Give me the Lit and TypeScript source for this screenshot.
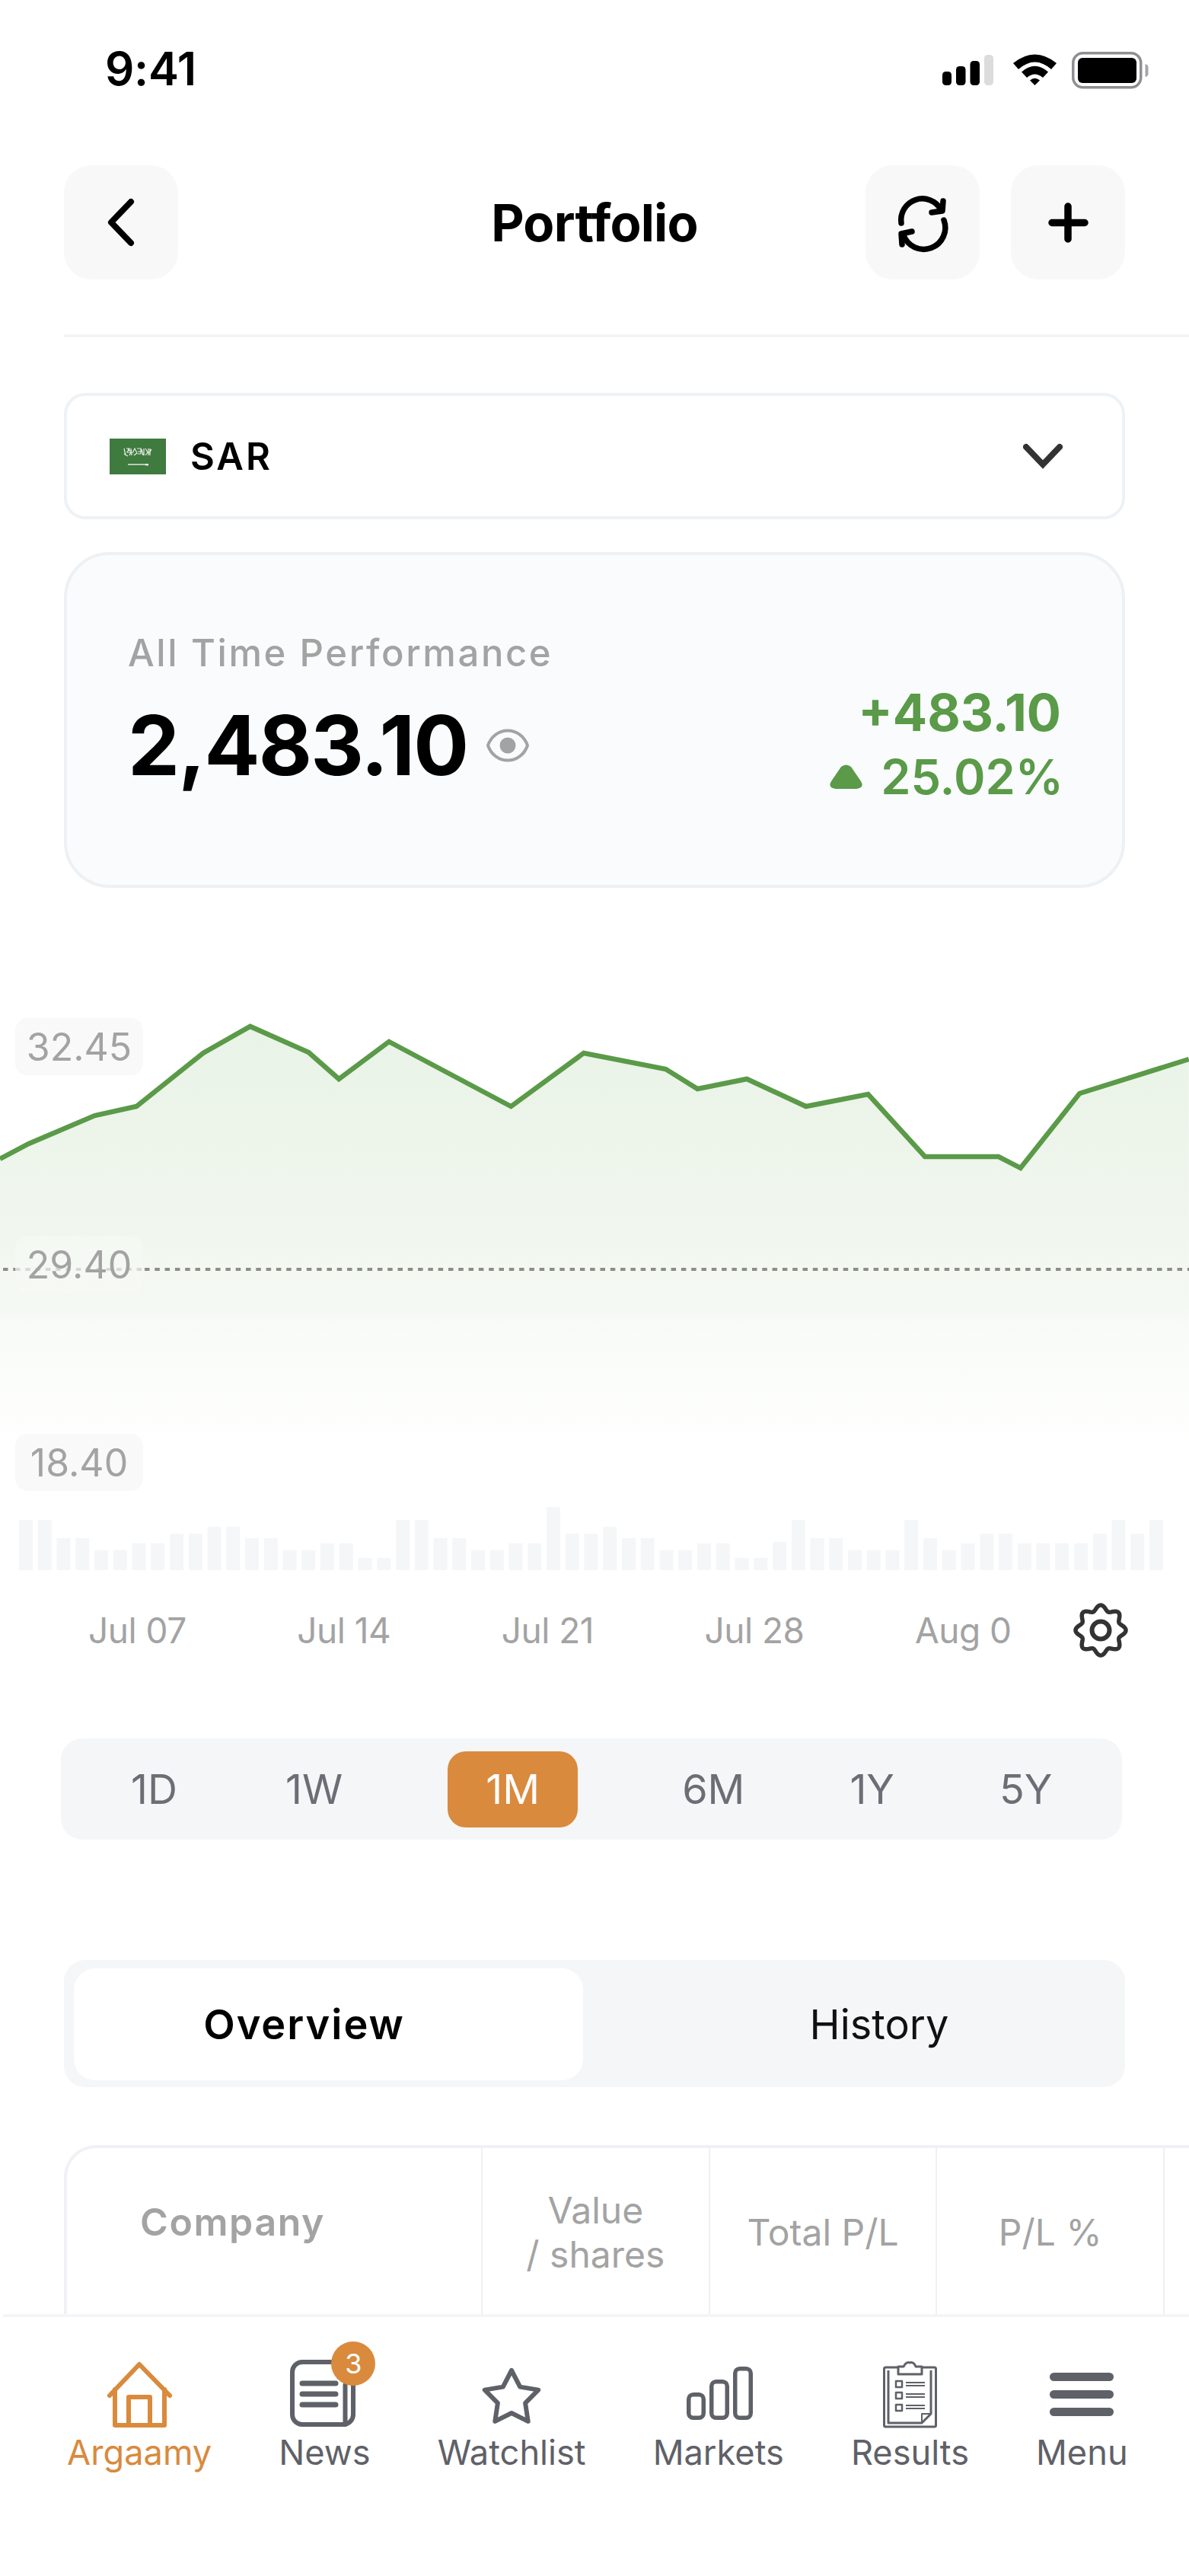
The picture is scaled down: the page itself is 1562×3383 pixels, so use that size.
import { LitElement, html, css, svg } from "lit";
import { customElement } from "lit/decorators.js";

const LINE: [number, number][] = [
  [0, 1522], [38, 1502], [125, 1465], [180, 1453], [268, 1383], [330, 1348], [407, 1382], [447, 1417],
  [513, 1368], [674, 1453], [770, 1383], [878, 1404], [920, 1430], [985, 1417], [1063, 1453], [1145, 1437],
  [1220, 1519], [1317, 1519], [1346, 1534], [1424, 1436], [1568, 1391],
];
const BAR_TOPS = [828,828,900,900,947,947,920,920,883,883,855,855,900,900,947,947,920,920,978,978,828,828,900,900,947,947,920,920,778,883,883,855,900,900,947,947,920,920,978,978,915,828,900,900,947,947,947,828,900,947,920,883,883,920,920,920,920,883,828,883,828];

const linePts = LINE.map((p) => `${(p[0] / 1.004).toFixed(1)},${p[1]}`).join(" ");
const areaPts = `0,1900 ${linePts} 1562,1900`;

function gearPath(cx: number, cy: number, R: number, a: number, n: number) {
  const pts: string[] = [];
  for (let i = 0; i < 240; i++) {
    const t = (i / 240) * Math.PI * 2;
    const r = R + a * Math.cos(n * t);
    pts.push(`${(cx + r * Math.sin(t)).toFixed(2)},${(cy - r * Math.cos(t)).toFixed(2)}`);
  }
  return "M" + pts.join("L") + "Z";
}
function starPts(cx: number, cy: number, R: number, r: number) {
  const pts: string[] = [];
  for (let i = 0; i < 10; i++) {
    const t = (i / 10) * Math.PI * 2;
    const q = i % 2 ? r : R;
    pts.push(`${(cx + q * Math.sin(t)).toFixed(1)},${(cy - q * Math.cos(t)).toFixed(1)}`);
  }
  return pts.join(" ");
}

@customElement("app-root")
export class AppRoot extends LitElement {
  static styles = css`
    :host { display: block; font-family: Inter, "Liberation Sans", sans-serif; }
    * { box-sizing: border-box; }
    .page { position: relative; width: 1562px; height: 3383px; overflow: hidden; background: #fff; color: #000; }
    svg { display: block; }

    .status { height: 180px; padding: 0 52px 0 138px; display: flex; align-items: center; justify-content: space-between; }
    .time { font-size: 60px; font-weight: 600; letter-spacing: -0.3px; }
    .status-icons { display: flex; align-items: center; margin-top: 12px; }

    .head { margin: 37px 84px 0 84px; display: grid; grid-template-columns: 1fr auto 1fr; align-items: center; }
    .btn { width: 150px; height: 150px; border-radius: 36px; background: #f8f8f8; display: flex; align-items: center; justify-content: center; }
    .title { font-size: 67px; font-weight: 700; letter-spacing: -0.8px; text-align: center; }
    .head-right { display: flex; justify-content: flex-end; gap: 41px; }
    .rule { margin: 72px 0 0 84px; height: 4px; background: #f3f4f6; }

    .select { margin: 73px 84px 0 84px; height: 166px; border: 4px solid #eef2f5; border-radius: 28px; display: flex; align-items: center; padding: 0 78px 0 56px; }
    .sar { margin-left: 32px; font-size: 49px; font-weight: 600; letter-spacing: 3px; }
    .chev { margin-left: auto; }

    .card { margin: 43px 84px 0 84px; height: 441px; border: 4px solid #eef1f4; border-radius: 60px; background: #f9fbfc; padding: 99px 80px 0 80px; display: flex; justify-content: space-between; }
    .perf { font-size: 49px; font-weight: 500; letter-spacing: 2.600px; color: #a3a3a3; line-height: 60px; }
    .total { display: flex; align-items: center; margin-top: 26px; gap: 24px; }
    .amount { font-size: 108px; font-weight: 700; letter-spacing: -1.800px; line-height: 130px; }
    .gain { text-align: right; color: #5a9a48; font-weight: 700; font-size: 67px; line-height: 84px; margin-top: 66px; }
    .pct { display: flex; align-items: center; justify-content: flex-end; gap: 24px; font-size: 63px; font-weight: 600; margin-right: -3px; }

    .chart { position: relative; margin-top: 134px; height: 801px; }
    .pill { position: absolute; left: 20px; width: 168px; height: 75px; border-radius: 16px; background: #f9f9f9; font-size: 50px; color: #a3a3a3; display: flex; align-items: center; justify-content: center; }
    .pill.clear { background: rgba(250, 252, 250, 0.35); }

    .dates { height: 80px; display: flex; align-items: center; gap: 145.500px; padding-left: 116px; font-size: 46px; letter-spacing: -0.5px; color: #a3a3a3; position: relative; }
    .gear { position: absolute; left: 1406px; top: 0; }

    .range { margin: 102px 88px 0 80px; height: 133px; border-radius: 28px; background: #f5f6f8; display: flex; align-items: center; gap: 138px; padding-left: 92px; font-size: 54px; color: #6b6e75; }
    .range span:first-child { margin-right: 4px; }
    .range .on { width: 171px; height: 100px; border-radius: 24px; background: #d98a3d; color: #fff; display: flex; align-items: center; justify-content: center; margin-right: -1px; }

    .tabs { margin: 158px 84px 0 84px; height: 167px; border-radius: 28px; background: #f5f6f8; padding: 11px 14px 9px 13px; display: flex; font-size: 54px; }
    .tab { flex: 1; display: flex; align-items: center; justify-content: center; color: #111; }
    .tab.on { flex: 0 0 669px; background: #fff; border-radius: 28px; font-weight: 600; letter-spacing: 2px; color: #000; padding-right: 64px; }
    .tab.off { padding-left: 80px; }

    .table { margin: 76px 0 0 84px; height: 300px; width: 1900px; border: solid #eff1f5; border-width: 4px 0 0 4px; border-top-left-radius: 42px; display: flex; }
    .cell { flex: 0 0 298.700px; border-right: 2px solid #eef0f3; display: flex; align-items: center; justify-content: center; font-size: 48px; line-height: 58px; color: #a3a3a3; text-align: center; height: 222px; }
    .cell.first { flex: 0 0 546px; justify-content: flex-start; padding: 0 0 28px 96px; font-size: 50px; font-weight: 600; letter-spacing: 1.600px; }

    .nav { position: absolute; left: 0; right: 0; bottom: 0; height: 344px; background: #fff; padding: 31px 0 0 88px; display: flex; gap: 88px; align-items: flex-start; color: #5f6168; font-size: 45.200px; }
    .nav::before { content: ""; position: absolute; left: 4px; right: 0; top: 0; height: 4px; background: #f4f5f7; }
    .nav-item { position: relative; display: flex; flex-direction: column; align-items: center; margin-top: 4px; }
    .nav-item.on { color: #d98a3d; }
    .nav-item svg { width: 120px; height: 116px; margin: 0 -30px; }
    .nav-label { line-height: 52px; margin-top: 5px; }
    .badge { position: absolute; left: calc(50% + 9px); top: 1px; width: 58px; height: 58px; border-radius: 50%; background: #d98a3d; color: #fff; font-size: 36px; display: flex; align-items: center; justify-content: center; }
  `;

  private flag() {
    return html`<svg width="74" height="47" viewBox="0 0 74 47">
      <rect width="74" height="47" fill="#3f7a3f"></rect>
      <path d="M19 13l2 9M22 13h4l-3 5h5l-2 4M28 13l1 9M30 19l3-6 3 6-4 3M36 13h5v7h-4M42 14l2 8M45 13v9M47 13l3 5-3 4M51 13v9M53 13v9M55 14l-3 5M19 20l5 3M24 14l5 3M37 17h5" fill="none" stroke="#e8f0e6" stroke-width="1.200"></path>
      <path d="M24 34h25" stroke="#e8f0e6" stroke-width="1.400"></path>
      <path d="M47 33h4v2.400h-4z" fill="#e8f0e6"></path>
    </svg>`;
  }

  render() {
    return html`<div class="page">
      <div class="status">
        <span class="time">9:41</span>
        <svg class="status-icons" width="272" height="60" viewBox="0 -4 272 60">
          <rect x="0" y="24" width="12" height="18" rx="4.500" fill="#000"></rect>
          <rect x="18" y="17" width="12.500" height="25" rx="4.500" fill="#000"></rect>
          <rect x="36.500" y="10" width="12.500" height="32" rx="4.500" fill="#000"></rect>
          <rect x="55" y="2" width="12" height="40" rx="4.500" fill="#dcdcdc"></rect>
          <path d="M93 13 Q121.500 -10 150 13 L143 21 Q121.500 2 100 21Z M104 24.500 Q121.500 9 139 24.500 L132 32 Q121.500 23 111 32Z M115 35.500 Q121.500 30 128 35.500 L121.500 42Z" fill="#000"></path>
          <rect x="171.750" y="-0.250" width="89" height="45" rx="13" fill="none" stroke="#8e8e93" stroke-width="3.500"></rect>
          <rect x="178" y="6" width="77" height="33" rx="6" fill="#000"></rect>
          <path d="M266.500 14 q4 1 4 4 v9 q0 3 -4 4z" fill="#a5a5a8"></path>
        </svg>
      </div>

      <div class="head">
        <div class="btn">
          <svg width="150" height="150" viewBox="0 0 150 150"><path d="M88 48 L62 75 L88 102" fill="none" stroke="#000" stroke-width="8" stroke-linecap="round" stroke-linejoin="round"></path></svg>
        </div>
        <div class="title">Portfolio</div>
        <div class="head-right">
          <div class="btn">
            <svg width="150" height="150" viewBox="0 0 150 150" fill="none" stroke="#000" stroke-width="7.500" stroke-linecap="round" stroke-linejoin="round">
              <g transform="translate(3 0)">
                <path d="M44 76 A28 28 0 0 1 96 58"></path>
                <path d="M99 47 L98 60 L84 62"></path>
                <path d="M100 72 A28 28 0 0 1 47 92"></path>
                <path d="M45 104 L44 90 L58 87"></path>
              </g>
            </svg>
          </div>
          <div class="btn">
            <svg width="150" height="150" viewBox="0 0 150 150"><path d="M75 54 V97 M54 75.500 H97" stroke="#000" stroke-width="9.500" stroke-linecap="round"></path></svg>
          </div>
        </div>
      </div>
      <div class="rule"></div>

      <div class="select">
        ${this.flag()}
        <span class="sar">SAR</span>
        <svg class="chev" width="52" height="34" viewBox="0 0 52 34"><path d="M4 5 L26 28 L48 5" fill="none" stroke="#333" stroke-width="8" stroke-linecap="round" stroke-linejoin="miter"></path></svg>
      </div>

      <div class="card">
        <div>
          <div class="perf">All Time Performance</div>
          <div class="total">
            <span class="amount">2,483.10</span>
            <svg width="58" height="44" viewBox="0 0 58 44" fill="none">
              <path d="M3 22 C12 -4 46 -4 55 22 C46 48 12 48 3 22Z" stroke="#a3a3a3" stroke-width="4"></path>
              <circle cx="29" cy="22" r="10.500" fill="#a3a3a3"></circle>
            </svg>
          </div>
        </div>
        <div class="gain">
          <div>+483.10</div>
          <div class="pct">
            <svg width="43" height="32" viewBox="0 0 43 32"><path d="M15 3 Q21.500 -2 28 3 L41 22 Q46 31 35 32 H8 Q-3 31 2 22Z" fill="#5a9a48"></path></svg>
            <span>25.02%</span>
          </div>
        </div>
      </div>

      <div class="chart">
        <svg width="1562" height="801" viewBox="0 1300 1562 801">
          <defs>
            <linearGradient id="area" gradientUnits="userSpaceOnUse" x1="0" y1="1340" x2="0" y2="1900">
              <stop offset="0" stop-color="#e9f3e6"></stop>
              <stop offset="0.46" stop-color="#f0f6ee"></stop>
              <stop offset="0.68" stop-color="#f5f9f3"></stop>
              <stop offset="0.73" stop-color="#f9fbf8"></stop>
              <stop offset="1" stop-color="#fefffe"></stop>
            </linearGradient>
          </defs>
          <polygon points=${areaPts} fill="url(#area)"></polygon>
          <polyline points=${linePts} fill="none" stroke="#5a9a48" stroke-width="6.500" stroke-linejoin="miter"></polyline>
          <line x1="4" y1="1667" x2="20" y2="1667" stroke="#8c8c8c" stroke-width="4" stroke-dasharray="6.500 6.800"></line>
          <line x1="20" y1="1667" x2="190" y2="1667" stroke="#c4c6c2" stroke-width="4" stroke-dasharray="6.500 6.800"></line>
          <line x1="190" y1="1667" x2="1562" y2="1667" stroke="#8c8c8c" stroke-width="4" stroke-dasharray="6.500 6.800"></line>
          ${BAR_TOPS.map((t, i) => {
            const top = 1720 + t / 3;
            return svg`<rect x=${(25 + i * 24.75).toFixed(2)} y=${top.toFixed(1)} width="18" height=${(2062 - top).toFixed(1)} fill="#f5f6f8"></rect>`;
          })}
        </svg>
        <div class="pill" style="top:37px">32.45</div>
        <div class="pill clear" style="top:323px">29.40</div>
        <div class="pill" style="top:583px">18.40</div>
      </div>

      <div class="dates">
        <span>Jul 07</span><span>Jul 14</span><span>Jul 21</span><span>Jul 28</span><span>Aug 0</span>
        <svg class="gear" width="80" height="80" viewBox="0 0 80 80" fill="none" stroke="#333" stroke-width="5.500">
          <path d=${gearPath(40, 40, 29.500, 3.500, 8)}></path>
          <circle cx="40" cy="40" r="11.500" stroke-width="6"></circle>
        </svg>
      </div>

      <div class="range">
        <span>1D</span><span>1W</span><span class="on">1M</span><span>6M</span><span>1Y</span><span>5Y</span>
      </div>

      <div class="tabs">
        <div class="tab on">Overview</div>
        <div class="tab off">History</div>
      </div>

      <div class="table">
        <div class="cell first">Company</div>
        <div class="cell">Value<br />/ shares</div>
        <div class="cell">Total P/L</div>
        <div class="cell">P/L %</div>
        <div class="cell"></div>
      </div>

      <div class="nav">
        <div class="nav-item on">
          <svg viewBox="0 0 120 116" fill="none" stroke="currentColor" stroke-width="6" stroke-linecap="round" stroke-linejoin="round">
            <path d="M21 72 L60 31 L100 72"></path>
            <path d="M28 64 V111 H93 V64"></path>
            <path d="M46 111 V74 H74 V111"></path>
          </svg>
          <span class="nav-label">Argaamy</span>
        </div>
        <div class="nav-item">
          <svg viewBox="0 0 120 116" fill="none" stroke="currentColor" stroke-width="6" stroke-linecap="round">
            <rect x="18" y="28" width="80" height="82" rx="13"></rect>
            <path d="M87.500 58 V110"></path>
            <path d="M31 56 H75 M31 70 H75 M31 84 H75" stroke-width="7"></path>
          </svg>
          <span class="badge">3</span>
          <span class="nav-label">News</span>
        </div>
        <div class="nav-item">
          <svg viewBox="0 0 120 116" fill="none" stroke="currentColor" stroke-width="6" stroke-linejoin="round">
            <polygon points=${starPts(60, 76, 37, 19)}></polygon>
          </svg>
          <span class="nav-label">Watchlist</span>
        </div>
        <div class="nav-item">
          <svg viewBox="0 0 120 116" fill="none" stroke="currentColor" stroke-width="5.500">
            <rect x="20.750" y="70.750" width="19.500" height="30.500" rx="6"></rect>
            <rect x="50.750" y="53.750" width="20.500" height="47.500" rx="6"></rect>
            <rect x="81.750" y="36.750" width="20.500" height="64.500" rx="6"></rect>
          </svg>
          <span class="nav-label">Markets</span>
        </div>
        <div class="nav-item">
          <svg viewBox="0 0 120 116" fill="none" stroke="currentColor" stroke-width="3" stroke-linejoin="round">
            <rect x="26.500" y="35" width="68" height="78" rx="2"></rect>
            <path d="M32 39 V108 H76 L88 96 V39"></path>
            <path d="M76 108 V96 H88" stroke-width="2"></path>
            <path d="M45 34 H52 Q56 27 60 29 Q65 27 68 34 H76 V44 H45Z" fill="#fff"></path>
            <rect x="42" y="53" width="8" height="8" stroke-width="2.500"></rect>
            <rect x="42" y="68" width="8" height="8" stroke-width="2.500"></rect>
            <rect x="42" y="84" width="8" height="8" stroke-width="2.500"></rect>
            <path d="M55 55 H80 M55 59 H80 M55 70 H80 M55 74 H80 M55 85 H80 M55 89 H80" stroke-width="2"></path>
          </svg>
          <span class="nav-label">Results</span>
        </div>
        <div class="nav-item">
          <svg viewBox="0 0 120 116" fill="currentColor">
            <rect x="18" y="42" width="84" height="11" rx="5.500"></rect>
            <rect x="18" y="65" width="84" height="11" rx="5.500"></rect>
            <rect x="18" y="88" width="84" height="11" rx="5.500"></rect>
          </svg>
          <span class="nav-label">Menu</span>
        </div>
      </div>
    </div>`;
  }
}
